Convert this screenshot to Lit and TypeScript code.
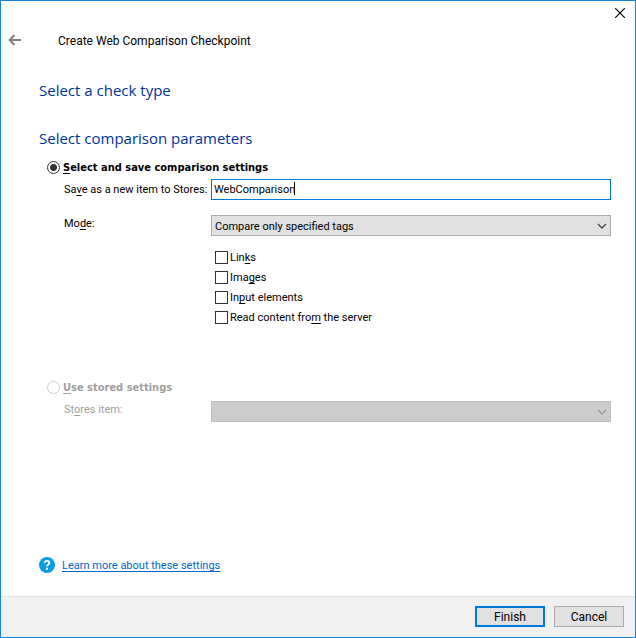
import { LitElement, html, css, svg } from "lit";
import { customElement, state } from "lit/decorators.js";

const chevron = svg`<path d="M1 1 L5 5 L9 1" fill="none" stroke="currentColor" stroke-width="1.3"/>`;

@customElement("app-root")
export class AppRoot extends LitElement {
  @state() private mode = "save";

  static styles = css`
    :host {
      display: flex;
      flex-direction: column;
      box-sizing: border-box;
      min-height: 100vh;
      border: 1px solid #1883d7;
      background: #fff;
      color: #000;
      font: 11px/14px Roboto, "Noto Sans", sans-serif;
    }
    * { box-sizing: border-box; }
    button, input, select { font: inherit; color: inherit; margin: 0; }
    svg { display: block; }
    u { text-decoration-thickness: 1px; text-underline-offset: 2px; }
    .titlebar { display: flex; justify-content: flex-end; height: 24px; padding-right: 5px; }
    .plain { display: flex; align-items: center; justify-content: center; border: 0; padding: 0; background: none; }
    .close { width: 20px; height: 24px; }
    .head { display: flex; align-items: center; height: 30px; padding-left: 7px; }
    .back { width: 14px; height: 30px; color: #808080; }
    h1 { margin: 0 0 0 36px; padding-top: 2px; font: 12px/16px Roboto, "Noto Sans", sans-serif; }
    main { display: flex; flex-direction: column; flex: 1; padding: 24px 24px 0 38px; }
    h2 { margin: 0 0 26px; font: 15px/22px "Open Sans", "Noto Sans", sans-serif; color: #003399; }
    .last { margin-bottom: 8px; }
    .option { display: flex; align-items: center; gap: 3px; height: 20px; padding-left: 8px; margin-bottom: 2px; font-family: "DejaVu Sans Condensed", "DejaVu Sans", sans-serif; font-weight: bold; }
    .option span, .check span, .help a { padding-top: 2px; }
    .radio { appearance: none; width: 13px; height: 13px; border: 1px solid #333; border-radius: 50%; background: #fff; }
    .radio:checked { background: radial-gradient(circle, #333 3px, #fff 4px); }
    .radio:disabled { border-color: #ccc; }
    .row { display: grid; grid-template-columns: 147px minmax(0, 1fr); align-items: start; margin: 0 0 15px 25px; line-height: 18px; white-space: nowrap; }
    .entry { line-height: 22px; margin-bottom: 14px; }
    .field { position: relative; height: 21px; }
    .text { display: block; width: 100%; height: 21px; border: 1px solid #0078d7; border-radius: 0; padding: 0 2px; line-height: 18px; background: #fff; outline: none; caret-color: transparent; }
    .caret { position: absolute; left: 83px; top: 3px; width: 1px; height: 13px; background: #000; }
    .select { appearance: none; display: block; width: 100%; height: 21px; border: 1px solid #adadad; border-radius: 0; padding: 2px 20px 0 3px; background: #e1e1e1; }
    .select:disabled { border-color: #bfbfbf; background: #ccc; opacity: 1; }
    .chevron { position: absolute; right: 4px; top: 8px; color: #444; pointer-events: none; }
    .checks { display: flex; flex-direction: column; margin: -4px 0 50px 176px; }
    .check { display: flex; align-items: center; gap: 2px; height: 20px; }
    .box { appearance: none; width: 13px; height: 13px; border: 1px solid #333; background: #fff; }
    .box:checked { background: #333; box-shadow: inset 0 0 0 2px #fff; }
    .off, .off .chevron { color: #a0a0a0; }
    .off.option { margin-bottom: 4px; }
    .off .chevron { color: #999; }
    .help { display: flex; align-items: center; gap: 7px; margin: auto 0 23px; }
    .help a { color: #0066cc; text-decoration: underline; text-decoration-thickness: 1px; text-underline-offset: 2px; }
    footer { display: flex; justify-content: flex-end; gap: 9px; padding: 9px 11px 10px; border-top: 1px solid #dfdfdf; background: #f0f0f0; }
    .btn { width: 70px; height: 21px; padding: 0; border: 1px solid #adadad; background: #e1e1e1; font: 12px/16px Roboto, "Noto Sans", sans-serif; }
    .default { border: 2px solid #0078d7; }
  `;

  private check(id: string, label: unknown) {
    return html`<label class="check" for=${id}>
      <input class="box" type="checkbox" id=${id} /><span>${label}</span>
    </label>`;
  }

  render() {
    return html`
      <div class="titlebar">
        <button class="plain close" aria-label="Close">
          <svg width="10" height="10" viewBox="0 0 10 10"><path d="M0 0 L10 10 M10 0 L0 10" stroke="#000" stroke-width="1.1"/></svg>
        </button>
      </div>
      <header class="head">
        <button class="plain back" aria-label="Back">
          <svg width="14" height="12" viewBox="0 0 14 12"><path d="M13 6 H2 M6.5 1 L1.7 6 L6.5 11" fill="none" stroke="currentColor" stroke-width="2"/></svg>
        </button>
        <h1>Create Web Comparison Checkpoint</h1>
      </header>
      <main>
        <h2>Select a check type</h2>
        <h2 class="last">Select comparison parameters</h2>
        <label class="option">
          <input class="radio" type="radio" name="source" .checked=${this.mode === "save"} @change=${() => (this.mode = "save")} />
          <span><u>S</u>elect and save comparison settings</span>
        </label>
        <div class="row entry">
          <label for="name">Sa<u>v</u>e as a new item to Stores:</label>
          <div class="field"><input class="text" id="name" type="text" value="WebComparison" /><span class="caret"></span></div>
        </div>
        <div class="row">
          <label for="mode">Mo<u>d</u>e:</label>
          <div class="field">
            <select class="select" id="mode"><option>Compare only specified tags</option></select>
            <svg class="chevron" width="10" height="6" viewBox="0 0 10 6">${chevron}</svg>
          </div>
        </div>
        <div class="checks">
          ${this.check("links", html`Lin<u>k</u>s`)}
          ${this.check("images", html`Ima<u>g</u>es`)}
          ${this.check("inputs", html`In<u>p</u>ut elements`)}
          ${this.check("server", html`Read content fro<u>m</u> the server`)}
        </div>
        <label class="option off">
          <input class="radio" type="radio" name="source" disabled />
          <span><u>U</u>se stored settings</span>
        </label>
        <div class="row off">
          <label for="item">St<u>o</u>res item:</label>
          <div class="field">
            <select class="select" id="item" disabled><option></option></select>
            <svg class="chevron" width="10" height="6" viewBox="0 0 10 6">${chevron}</svg>
          </div>
        </div>
        <div class="help">
          <svg width="16" height="16" viewBox="0 0 16 16" aria-hidden="true">
            <circle cx="8" cy="8" r="8" fill="#0a9be0"/>
            <path d="M5.6 5.9 Q5.8 3.9 8 3.9 Q10.3 3.9 10.3 5.9 Q10.3 7 9 7.7 Q8 8.3 8 9.6" fill="none" stroke="#fff" stroke-width="1.9"/>
            <rect x="7" y="10.8" width="2" height="2" fill="#fff"/>
          </svg>
          <a href="#settings">Learn more about these settings</a>
        </div>
      </main>
      <footer>
        <button class="btn default">Finish</button>
        <button class="btn">Cancel</button>
      </footer>
    `;
  }
}
